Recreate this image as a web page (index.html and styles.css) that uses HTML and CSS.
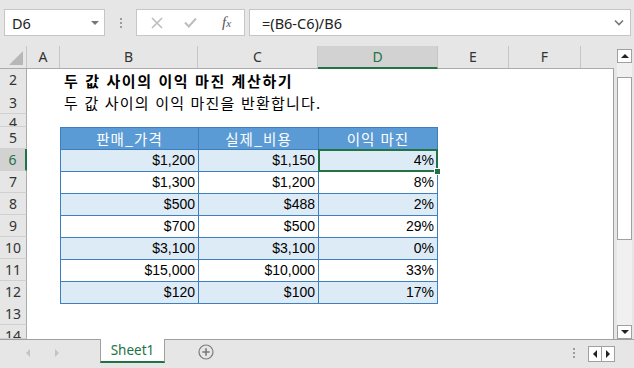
FILE: index.html
```html
<!DOCTYPE html>
<html lang="ko">
<head>
    <meta charset="UTF-8">
    <title>이익 마진 계산</title>
    <link rel="stylesheet" href="styles.css">
</head>
<body>
    <!-- Barra de fórmulas -->
    <div class="formula-bar">
        <div class="name-box">
            <span>D6</span>
            <span class="dd"></span>
        </div>
        <div class="grip"><i></i><i></i><i></i></div>
        <div class="fx-buttons">
            <svg width="12" height="12" viewBox="0 0 12 12"><path d="M1 1 L11 11 M11 1 L1 11" stroke="#bdbdbd" stroke-width="1.6" fill="none"/></svg>
            <svg width="13" height="11" viewBox="0 0 13 11"><path d="M1 5.5 L4.8 9.5 L12 1.5" stroke="#bdbdbd" stroke-width="2" fill="none"/></svg>
            <span class="fx">f<small>x</small></span>
        </div>
        <div class="formula-input">
            <span>=(B6-C6)/B6</span>
            <svg width="10" height="7" viewBox="0 0 10 7"><path d="M1 1.5 L5 5.5 L9 1.5" stroke="#777" stroke-width="1.6" fill="none"/></svg>
        </div>
    </div>

    <div class="main">
        <div class="sheet">
            <div class="row head">
                <div class="corner"><span></span></div>
                <div class="ch">A</div>
                <div class="ch">B</div>
                <div class="ch">C</div>
                <div class="ch sel">D</div>
                <div class="ch">E</div>
                <div class="ch">F</div>
                <div class="ch last"></div>
            </div>

            <div class="body">
                <div class="row r2">
                    <div class="rh">2</div><div></div>
                    <div class="title">두 값 사이의 이익 마진 계산하기</div>
                </div>
                <div class="row r3">
                    <div class="rh">3</div><div></div>
                    <div class="subtitle">두 값 사이의 이익 마진을 반환합니다.</div>
                </div>
                <div class="row r4">
                    <div class="rh"><span>4</span></div>
                </div>
                <div class="row">
                    <div class="rh">5</div><div></div>
                    <div class="t th">판매_가격</div><div class="t th">실제_비용</div><div class="t th end">이익 마진</div>
                </div>
                <div class="row band">
                    <div class="rh sel">6</div><div></div>
                    <div class="t">$1,200</div><div class="t">$1,150</div><div class="t end active">4%</div>
                </div>
                <div class="row">
                    <div class="rh">7</div><div></div>
                    <div class="t">$1,300</div><div class="t">$1,200</div><div class="t end">8%</div>
                </div>
                <div class="row band">
                    <div class="rh">8</div><div></div>
                    <div class="t">$500</div><div class="t">$488</div><div class="t end">2%</div>
                </div>
                <div class="row">
                    <div class="rh">9</div><div></div>
                    <div class="t">$700</div><div class="t">$500</div><div class="t end">29%</div>
                </div>
                <div class="row band">
                    <div class="rh">10</div><div></div>
                    <div class="t">$3,100</div><div class="t">$3,100</div><div class="t end">0%</div>
                </div>
                <div class="row">
                    <div class="rh">11</div><div></div>
                    <div class="t">$15,000</div><div class="t">$10,000</div><div class="t end">33%</div>
                </div>
                <div class="row band">
                    <div class="rh">12</div><div></div>
                    <div class="t bottom">$120</div><div class="t bottom">$100</div><div class="t end bottom">17%</div>
                </div>
                <div class="row">
                    <div class="rh">13</div>
                </div>
                <div class="row r14">
                    <div class="rh">14</div>
                </div>
            </div>
        </div>

        <!-- Barra de rolagem vertical -->
        <div class="vscroll">
            <div class="sbtn"><span class="tri up"></span></div>
            <div class="track"><div class="thumb"></div></div>
            <div class="sbtn"><span class="tri down"></span></div>
        </div>
    </div>

    <!-- Abas das planilhas -->
    <div class="tabbar">
        <div class="tab-nav">
            <span class="tri left light"></span>
            <span class="tri right light"></span>
        </div>
        <div class="tab">Sheet1</div>
        <div class="add-sheet">
            <svg width="16" height="16" viewBox="0 0 16 16"><circle cx="8" cy="8" r="7" stroke="#7a7a7a" stroke-width="1.2" fill="none"/><path d="M8 4.3 V11.7 M4.3 8 H11.7" stroke="#7a7a7a" stroke-width="1.6"/></svg>
        </div>
        <div class="spacer"></div>
        <div class="grip small"><i></i><i></i><i></i></div>
        <div class="hscroll">
            <div class="hbtn"><span class="tri left"></span></div>
            <div class="hbtn"><span class="tri right"></span></div>
        </div>
    </div>
</body>
</html>
```

FILE: styles.css
```css
body {
    margin: 0;
    width: 634px;
    height: 368px;
    overflow: hidden;
    background-color: #e6e6e6;
    font-family: "Liberation Sans", "Noto Sans CJK KR", sans-serif;
    color: #000;
}

/* Barra de fórmulas */
.formula-bar {
    height: 46px;
    display: flex;
    align-items: flex-start;
    padding-top: 9px;
    box-sizing: border-box;
}

.name-box {
    width: 101px;
    height: 27px;
    margin-left: 4px;
    box-sizing: border-box;
    background: #fff;
    border: 1px solid #c6c6c6;
    display: flex;
    align-items: center;
    justify-content: space-between;
    padding: 0 5px 0 7px;
    font-family: "Noto Sans", sans-serif;
    font-size: 14.5px;
    color: #222;
}

.name-box .dd {
    width: 0;
    height: 0;
    border-left: 4px solid transparent;
    border-right: 4px solid transparent;
    border-top: 4px solid #777;
}

.grip {
    width: 31px;
    height: 27px;
    display: flex;
    flex-direction: column;
    align-items: center;
    justify-content: center;
    gap: 2px;
}

.grip i {
    display: block;
    width: 2px;
    height: 2px;
    background: #9c9c9c;
}

.fx-buttons {
    width: 109px;
    height: 27px;
    box-sizing: border-box;
    background: #fff;
    border: 1px solid #c6c6c6;
    display: flex;
    align-items: center;
    padding-left: 14px;
    gap: 21px;
}

.fx {
    font-family: "Liberation Serif", serif;
    font-style: italic;
    font-size: 15px;
    color: #555;
    margin-left: 4px;
}

.fx small {
    font-size: 11px;
}

.formula-input {
    flex: 1;
    height: 27px;
    margin: 0 3px 0 4px;
    box-sizing: border-box;
    background: #fff;
    border: 1px solid #c6c6c6;
    display: flex;
    align-items: center;
    justify-content: space-between;
    padding: 0 6px 0 12px;
    font-family: "Noto Sans", sans-serif;
    font-size: 14.5px;
    color: #222;
}

/* Planilha */
.main {
    display: flex;
    height: 293px;
}

.sheet {
    width: 614px;
}

.row {
    display: grid;
    grid-template-columns: 27px 33px 138px 120px 120px 71px 72px 1fr;
    height: 22px;
}

.head {
    height: 23px;
    border-bottom: 1px solid #ababab;
    box-sizing: border-box;
}

.corner {
    position: relative;
    border-right: 1px solid #c6c6c6;
}

.corner span {
    position: absolute;
    right: 3px;
    bottom: 3px;
    width: 0;
    height: 0;
    border-left: 14px solid transparent;
    border-bottom: 14px solid #b7b7b7;
}

.ch {
    border-right: 1px solid #c6c6c6;
    text-align: center;
    font-family: "Noto Sans", sans-serif;
    font-size: 14px;
    line-height: 22px;
    color: #333;
}

.ch.last {
    border-right: none;
}

.ch.sel {
    background: #d2d2d2;
    color: #217346;
    border-bottom: 2px solid #217346;
    margin-bottom: -1px;
    line-height: 21px;
}

.body {
    background: #fff;
    border-right: 1px solid #a0a0a0;
    height: 270px;
    overflow: hidden;
}

.rh {
    background: #e6e6e6;
    border-right: 1px solid #ababab;
    border-bottom: 1px solid #d0d0d0;
    box-sizing: border-box;
    text-align: center;
    font-family: "Noto Sans", sans-serif;
    font-size: 14px;
    line-height: 21px;
    color: #333;
    overflow: hidden;
}

.rh.sel {
    background: #d2d2d2;
    color: #217346;
    border-right: 2px solid #217346;
}

.r2 {
    height: 23px;
}

.r4 {
    height: 13px;
}

.r4 .rh {
    line-height: 12px;
}

.r4 .rh span {
    display: block;
    height: 12px;
    overflow: hidden;
    line-height: 17px;
}

.r14 {
    height: 14px;
}

.title,
.subtitle {
    grid-column: 3 / -1;
    padding-left: 4px;
    font-family: "Noto Sans CJK KR", sans-serif;
    font-size: 15px;
    white-space: nowrap;
}

.title {
    font-weight: bold;
    line-height: 24px;
    letter-spacing: 1.6px;
}

.subtitle {
    line-height: 21px;
    letter-spacing: 1.2px;
}

/* Tabela */
.t {
    border-left: 1px solid #3d7fbf;
    border-top: 1px solid #3d7fbf;
    text-align: right;
    padding-right: 3px;
    font-size: 14px;
    line-height: 21px;
}

.t.end {
    border-right: 1px solid #3d7fbf;
}

.t.bottom {
    border-bottom: 1px solid #3d7fbf;
}

.t.th {
    background: #5b9bd5;
    color: #fff;
    text-align: center;
    padding-right: 0;
    font-family: "Noto Sans CJK KR", sans-serif;
    font-size: 14.5px;
    letter-spacing: 1px;
}

.band .t {
    background: #ddebf7;
}

.t.active {
    position: relative;
}

.t.active::after {
    content: "";
    position: absolute;
    left: -1px;
    top: -1px;
    right: -1px;
    bottom: -1px;
    border: 2px solid #217346;
}

.t.active::before {
    content: "";
    position: absolute;
    right: -4px;
    bottom: -4px;
    width: 5px;
    height: 5px;
    background: #217346;
    border: 1px solid #fff;
    z-index: 1;
}

/* Barra de rolagem */
.vscroll {
    flex: 1;
    display: flex;
    flex-direction: column;
    padding: 3px 2px 0 3px;
}

.sbtn {
    height: 14px;
    box-sizing: border-box;
    background: #fff;
    border: 1px solid #a0a0a0;
    display: flex;
    align-items: center;
    justify-content: center;
}

.track {
    flex: 1;
    background: #f0f0f0;
    padding-top: 14px;
}

.thumb {
    height: 163px;
    box-sizing: border-box;
    background: #fff;
    border: 1px solid #a0a0a0;
}

.tri {
    display: block;
    width: 0;
    height: 0;
}

.tri.up {
    border-left: 4px solid transparent;
    border-right: 4px solid transparent;
    border-bottom: 4px solid #222;
}

.tri.down {
    border-left: 4px solid transparent;
    border-right: 4px solid transparent;
    border-top: 4px solid #222;
}

.tri.left {
    border-top: 4px solid transparent;
    border-bottom: 4px solid transparent;
    border-right: 4px solid #222;
}

.tri.right {
    border-top: 4px solid transparent;
    border-bottom: 4px solid transparent;
    border-left: 4px solid #222;
}

.tri.light.left {
    border-right-color: #c4c4c4;
}

.tri.light.right {
    border-left-color: #c4c4c4;
}

/* Abas */
.tabbar {
    height: 29px;
    border-top: 1px solid #a0a0a0;
    box-sizing: border-box;
    display: flex;
    align-items: flex-start;
}

.tab-nav {
    width: 100px;
    height: 26px;
    display: flex;
    align-items: center;
    padding-left: 26px;
    gap: 25px;
    box-sizing: border-box;
}

.tab {
    width: 65px;
    height: 24px;
    box-sizing: border-box;
    background: #fff;
    border-left: 1px solid #a0a0a0;
    border-right: 1px solid #a0a0a0;
    border-bottom: 2px solid #217346;
    margin-top: -1px;
    text-align: center;
    font-family: "Noto Sans", sans-serif;
    font-size: 13.5px;
    line-height: 23px;
    color: #217346;
}

.add-sheet {
    margin-left: 33px;
    margin-top: 4px;
}

.spacer {
    flex: 1;
}

.grip.small {
    width: 4px;
    height: 26px;
}

.hscroll {
    display: flex;
    margin: 6px 19px 0 12px;
    border: 1px solid #a0a0a0;
    background: #fff;
}

.hbtn {
    width: 12px;
    height: 14px;
    display: flex;
    align-items: center;
    justify-content: center;
}

.hbtn + .hbtn {
    border-left: 1px solid #a0a0a0;
}
```
